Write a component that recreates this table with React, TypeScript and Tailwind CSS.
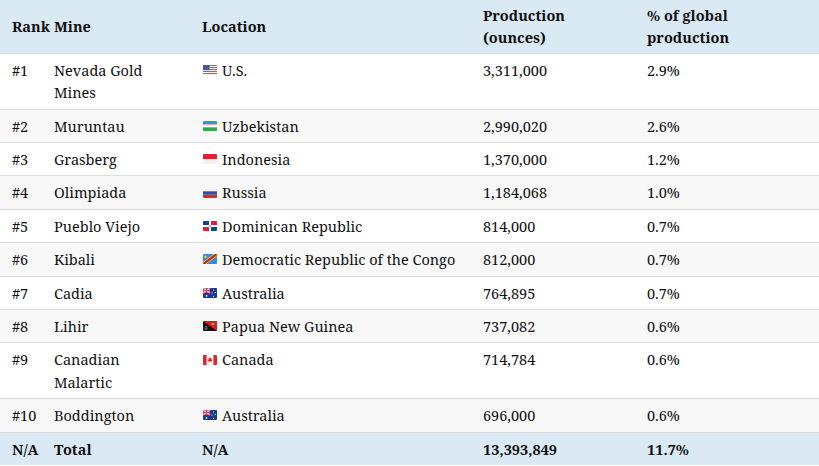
import React from 'react';

type FlagCode = 'us' | 'uz' | 'id' | 'ru' | 'do' | 'cd' | 'au' | 'pg' | 'ca';

interface MineRow {
  rank: string;
  mine: string;
  flag: FlagCode;
  location: string;
  production: string;
  share: string;
}

const MINES: MineRow[] = [
  { rank: '#1', mine: 'Nevada Gold Mines', flag: 'us', location: 'U.S.', production: '3,311,000', share: '2.9%' },
  { rank: '#2', mine: 'Muruntau', flag: 'uz', location: 'Uzbekistan', production: '2,990,020', share: '2.6%' },
  { rank: '#3', mine: 'Grasberg', flag: 'id', location: 'Indonesia', production: '1,370,000', share: '1.2%' },
  { rank: '#4', mine: 'Olimpiada', flag: 'ru', location: 'Russia', production: '1,184,068', share: '1.0%' },
  { rank: '#5', mine: 'Pueblo Viejo', flag: 'do', location: 'Dominican Republic', production: '814,000', share: '0.7%' },
  { rank: '#6', mine: 'Kibali', flag: 'cd', location: 'Democratic Republic of the Congo', production: '812,000', share: '0.7%' },
  { rank: '#7', mine: 'Cadia', flag: 'au', location: 'Australia', production: '764,895', share: '0.7%' },
  { rank: '#8', mine: 'Lihir', flag: 'pg', location: 'Papua New Guinea', production: '737,082', share: '0.6%' },
  { rank: '#9', mine: 'Canadian Malartic', flag: 'ca', location: 'Canada', production: '714,784', share: '0.6%' },
  { rank: '#10', mine: 'Boddington', flag: 'au', location: 'Australia', production: '696,000', share: '0.6%' }
];

const UnionJack = () => (
  <g>
    <rect x="0" y="0" width="7" height="5" fill="#1f3a8a" />
    <path d="M0 0L7 5M7 0L0 5" stroke="#fff" strokeWidth="1.4" />
    <path d="M0 0L7 5M7 0L0 5" stroke="#d22f3c" strokeWidth="0.6" />
    <path d="M3.5 0V5M0 2.5H7" stroke="#fff" strokeWidth="1.6" />
    <path d="M3.5 0V5M0 2.5H7" stroke="#d22f3c" strokeWidth="0.9" />
  </g>
);

const Flag = ({ code }: { code: FlagCode }) => {
  const body = () => {
    switch (code) {
      case 'us':
        return (
          <g>
            <rect width="14" height="10" fill="#fff" />
            {[0, 2, 4, 6, 8].map(y => (
              <rect key={y} x="0" y={y} width="14" height="1.1" fill="#d0535b" />
            ))}
            <rect width="6.5" height="5.2" fill="#4a5a9a" />
          </g>
        );
      case 'uz':
        return (
          <g>
            <rect width="14" height="3.3" fill="#2a9fc4" />
            <rect y="3.3" width="14" height="3.4" fill="#fff" />
            <rect y="6.7" width="14" height="3.3" fill="#2fa84f" />
            <rect y="3.2" width="14" height="0.4" fill="#d33" />
            <rect y="6.4" width="14" height="0.4" fill="#d33" />
          </g>
        );
      case 'id':
        return (
          <g>
            <rect width="14" height="5" fill="#e0212b" />
            <rect y="5" width="14" height="5" fill="#f2f2f2" />
          </g>
        );
      case 'ru':
        return (
          <g>
            <rect width="14" height="3.3" fill="#f4f4f4" />
            <rect y="3.3" width="14" height="3.4" fill="#2c4fa3" />
            <rect y="6.7" width="14" height="3.3" fill="#d52b2b" />
          </g>
        );
      case 'do':
        return (
          <g>
            <rect width="14" height="10" fill="#fff" />
            <rect width="6" height="4" fill="#1c3f8c" />
            <rect x="8" width="6" height="4" fill="#d0253a" />
            <rect y="6" width="6" height="4" fill="#d0253a" />
            <rect x="8" y="6" width="6" height="4" fill="#1c3f8c" />
            <rect x="6.3" y="4.3" width="1.4" height="1.4" fill="#2e7d32" />
          </g>
        );
      case 'cd':
        return (
          <g>
            <rect width="14" height="10" fill="#2f8cf0" />
            <path d="M-1 11L15 -1" stroke="#f5d90a" strokeWidth="3.6" />
            <path d="M-1 11L15 -1" stroke="#d4202c" strokeWidth="2.2" />
            <path d="M2.5 0.8L3 2.2L4.4 2.2L3.3 3L3.7 4.3L2.5 3.5L1.3 4.3L1.7 3L0.6 2.2L2 2.2Z" fill="#f5d90a" />
          </g>
        );
      case 'au':
        return (
          <g>
            <rect width="14" height="10" fill="#1f3a8a" />
            <UnionJack />
            <circle cx="3.5" cy="7.8" r="0.9" fill="#fff" />
            <circle cx="10.5" cy="2" r="0.6" fill="#fff" />
            <circle cx="12.2" cy="4.3" r="0.6" fill="#fff" />
            <circle cx="9" cy="5" r="0.6" fill="#fff" />
            <circle cx="10.5" cy="8.3" r="0.6" fill="#fff" />
          </g>
        );
      case 'pg':
        return (
          <g>
            <rect width="14" height="10" fill="#111" />
            <path d="M0 0H14V10Z" fill="#d0212b" />
            <path d="M8.5 2.5C9.5 1.8 10.8 2 11.6 3C10.8 3.3 10.5 4 9.8 4.3C9.2 4 8.8 3.3 8.5 2.5Z" fill="#f6c324" />
            <circle cx="3" cy="5.5" r="0.5" fill="#fff" />
            <circle cx="2" cy="7" r="0.5" fill="#fff" />
            <circle cx="4" cy="7" r="0.5" fill="#fff" />
            <circle cx="3" cy="8.6" r="0.5" fill="#fff" />
          </g>
        );
      case 'ca':
        return (
          <g>
            <rect width="14" height="10" fill="#fff" />
            <rect width="3.6" height="10" fill="#e0252f" />
            <rect x="10.4" width="3.6" height="10" fill="#e0252f" />
            <path d="M7 2L7.6 3.3L8.5 3L8.2 5L9.3 4.2L9.6 4.9L9 5.6L9.3 6.3L7.3 6.2V7.8H6.7V6.2L4.7 6.3L5 5.6L4.4 4.9L4.7 4.2L5.8 5L5.5 3L6.4 3.3Z" fill="#e0252f" />
          </g>
        );
    }
  };
  return (
    <svg width="14" height="10" viewBox="0 0 14 10" className="shrink-0">
      <defs>
        <clipPath id={`clip-${code}`}>
          <rect width="14" height="10" rx="1" />
        </clipPath>
      </defs>
      <g clipPath={`url(#clip-${code})`}>{body()}</g>
    </svg>
  );
};

export default function App() {
  const font = { fontFamily: '"Noto Serif", "DejaVu Serif", "Liberation Serif", serif' };

  return (
    <div className="w-[819px] h-[466px] overflow-hidden bg-white text-[#111]" style={font}>
      <table className="w-full table-fixed border-collapse text-[14.5px] leading-[22.4px]">
        <colgroup>
          <col className="w-[42px]" />
          <col className="w-[148px]" />
          <col className="w-[281px]" />
          <col className="w-[164px]" />
          <col className="w-[184px]" />
        </colgroup>
        {/* Header */}
        <thead>
          <tr className="bg-[#daeaf5] border-b border-[#d6dde2] text-left align-middle font-bold">
            <th className="pl-3 pr-0 py-[4px] whitespace-nowrap">Rank</th>
            <th className="pl-3 pr-3 py-[4px]">Mine</th>
            <th className="pl-3 pr-3 py-[4px]">Location</th>
            <th className="pl-3 pr-3 py-[4px]">Production<br />(ounces)</th>
            <th className="pl-3 pr-3 py-[4px]">% of global<br />production</th>
          </tr>
        </thead>
        <tbody>
          {MINES.map((row, i) => (
            <tr
              key={row.rank}
              className={`align-top border-b border-[#dcdcdc] ${i % 2 === 1 ? 'bg-[#f8f8f8]' : 'bg-white'}`}
            >
              <td className="pl-3 pr-0 py-[5px]">{row.rank}</td>
              <td className="pl-3 pr-4 py-[5px]">{row.mine}</td>
              <td className="pl-3 pr-3 py-[5px]">
                <div className="flex items-center gap-[5px]">
                  <span className="flex h-[22.4px] items-center pl-px">
                    <Flag code={row.flag} />
                  </span>
                  <span className="whitespace-nowrap">{row.location}</span>
                </div>
              </td>
              <td className="pl-3 pr-3 py-[5px]">{row.production}</td>
              <td className="pl-3 pr-3 py-[5px]">{row.share}</td>
            </tr>
          ))}
          {/* Total row */}
          <tr className="bg-[#daeaf5] font-bold align-top">
            <td className="pl-3 pr-0 py-[5px]">N/A</td>
            <td className="pl-3 pr-3 py-[5px]">Total</td>
            <td className="pl-3 pr-3 py-[5px]">N/A</td>
            <td className="pl-3 pr-3 py-[5px]">13,393,849</td>
            <td className="pl-3 pr-3 py-[5px]">11.7%</td>
          </tr>
        </tbody>
      </table>
    </div>
  );
}
